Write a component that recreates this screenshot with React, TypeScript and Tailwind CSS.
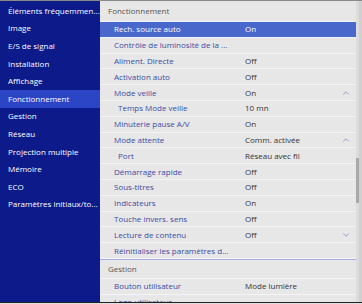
import { ChevronUp, ChevronDown } from "lucide-react";

const sideItems = [
  "Éléments fréquemmen...",
  "Image",
  "E/S de signal",
  "Installation",
  "Affichage",
  "Fonctionnement",
  "Gestion",
  "Réseau",
  "Projection multiple",
  "Mémoire",
  "ECO",
  "Paramètres initiaux/to...",
];

type Row = {
  label: string;
  value?: string;
  indent?: boolean;
  chevron?: "up" | "down";
  selected?: boolean;
};

const rows: Row[] = [
  { label: "Rech. source auto", value: "On", selected: true },
  { label: "Contrôle de luminosité de la ..." },
  { label: "Aliment. Directe", value: "Off" },
  { label: "Activation auto", value: "Off" },
  { label: "Mode veille", value: "On", chevron: "up" },
  { label: "Temps Mode veille", value: "10 mn", indent: true },
  { label: "Minuterie pause A/V", value: "On" },
  { label: "Mode attente", value: "Comm. activée", chevron: "up" },
  { label: "Port", value: "Réseau avec fil", indent: true },
  { label: "Démarrage rapide", value: "Off" },
  { label: "Sous-titres", value: "Off" },
  { label: "Indicateurs", value: "On" },
  { label: "Touche invers. sens", value: "Off" },
  { label: "Lecture de contenu", value: "Off", chevron: "down" },
  { label: "Réinitialiser les paramètres d..." },
];

function SettingRow({ row }: { row: Row }) {
  return (
    <div
      className={
        row.selected
          ? "flex shrink-0 h-[15.8px] items-center bg-[#4a68cc] text-white border-b border-[#f2f2f2]"
          : "flex shrink-0 h-[15.8px] items-center border-b border-[#f4f4f4]"
      }
    >
      <div
        className={
          (row.indent ? "pl-[18px] " : "pl-[14px] ") +
          "w-[145px] truncate " +
          (row.selected ? "text-white" : "text-[#3a4ba3]")
        }
      >
        {row.label}
      </div>
      <div className={"flex-1 " + (row.selected ? "text-white" : "text-[#333]")}>
        {row.value}
      </div>
      <div className="w-[20px] flex justify-center text-[#5a6cc8]">
        {row.chevron === "up" && <ChevronUp size={10} strokeWidth={1.5} />}
        {row.chevron === "down" && <ChevronDown size={10} strokeWidth={1.5} />}
      </div>
    </div>
  );
}

export default function App() {
  return (
    <div
      className="w-[362px] h-[304px] flex flex-col bg-[#e7e7e7] text-[8px] overflow-hidden"
      style={{ fontFamily: '"Open Sans", sans-serif' }}
    >
      <div className="h-px shrink-0 bg-[#8a8a8a]" />
      <div className="flex flex-1 min-h-0">
        <div className="w-[100px] bg-[#0c1a8a] text-white pt-px">
          {sideItems.map((item) => (
            <div
              key={item}
              className={
                "h-[17.6px] flex items-center pl-[8px] truncate " +
                (item === "Fonctionnement" ? "bg-[#2c45c6]" : "")
              }
            >
              {item}
            </div>
          ))}
        </div>
        <div className="flex-1 flex min-w-0">
          <div className="flex-1 min-w-0 flex flex-col overflow-hidden">
            <div className="h-[21px] shrink-0 flex items-center pl-[8px] text-[#555] border-b border-[#f4f4f4]">
              Fonctionnement
            </div>
            {rows.map((r) => (
              <SettingRow key={r.label} row={r} />
            ))}
            <div className="h-px shrink-0 bg-[#a5acdb]" />
            <div className="h-[19px] shrink-0 flex items-center pl-[8px] text-[#555] border-b border-[#f4f4f4]">
              Gestion
            </div>
            <SettingRow row={{ label: "Bouton utilisateur", value: "Mode lumière" }} />
            <SettingRow row={{ label: "Logo utilisateur" }} />
          </div>
          <div className="w-[3px] bg-[#dcdcdc] flex flex-col">
            <div className="h-[157px]" />
            <div className="h-[45px] bg-[#a8a8a8]" />
          </div>
          <div className="w-[3px] bg-[#d0d0d0]" />
        </div>
      </div>
      <div className="h-px shrink-0 bg-[#222]" />
      <div className="h-px shrink-0 bg-[#e0e0e0]" />
    </div>
  );
}
